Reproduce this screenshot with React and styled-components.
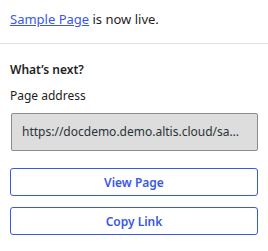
import React from "react";
import styled, { createGlobalStyle } from "styled-components";

const Global = createGlobalStyle`
  html, body { margin: 0; padding: 0; background: #fff; }
  body { font-family: "Noto Sans", "Open Sans", sans-serif; color: #1e1e1e; }
`;

const Panel = styled.div`
  width: 268px;
  display: flex;
  flex-direction: column;
`;

const Top = styled.div`
  padding: 9px 10px 14px;
  font-size: 13px;
  line-height: 20px;
  border-bottom: 1px solid #e0e0e0;
`;

const Link = styled.a`
  color: #3858e9;
  text-decoration: underline;
`;

const Body = styled.div`
  padding: 16px 10px 0 10px;
  display: flex;
  flex-direction: column;
`;

const Heading = styled.div`
  font-size: 12px;
  font-weight: 600;
  line-height: 20px;
`;

const Label = styled.div`
  font-size: 12px;
  line-height: 20px;
  margin-top: 6px;
`;

const AddressBox = styled.div`
  margin: 7px 0 0 1px;
  height: 38px;
  box-sizing: border-box;
  border: 1px solid #8c8c8c;
  border-radius: 2px;
  background: #ddd;
  font-size: 12px;
  line-height: 36px;
  padding: 0 10px;
  color: #2c3338;
  white-space: nowrap;
  overflow: hidden;
  text-overflow: ellipsis;
`;

const Buttons = styled.div`
  display: flex;
  flex-direction: column;
  gap: 11px;
  margin-top: 17px;
`;

const Button = styled.button`
  height: 28px;
  width: 248px;
  box-sizing: border-box;
  border: 1px solid #3858e9;
  border-radius: 3px;
  background: #fff;
  color: #3858e9;
  font-family: inherit;
  font-size: 12px;
  font-weight: 600;
  cursor: pointer;
`;

export default function App() {
  return (
    <Panel>
      <Global />
      <Top>
        <Link href="#">Sample Page</Link> is now live.
      </Top>
      <Body>
        <Heading>What’s next?</Heading>
        <Label>Page address</Label>
        <AddressBox>https://docdemo.demo.altis.cloud/sample-page/</AddressBox>
        <Buttons>
          <Button>View Page</Button>
          <Button>Copy Link</Button>
        </Buttons>
      </Body>
    </Panel>
  );
}
